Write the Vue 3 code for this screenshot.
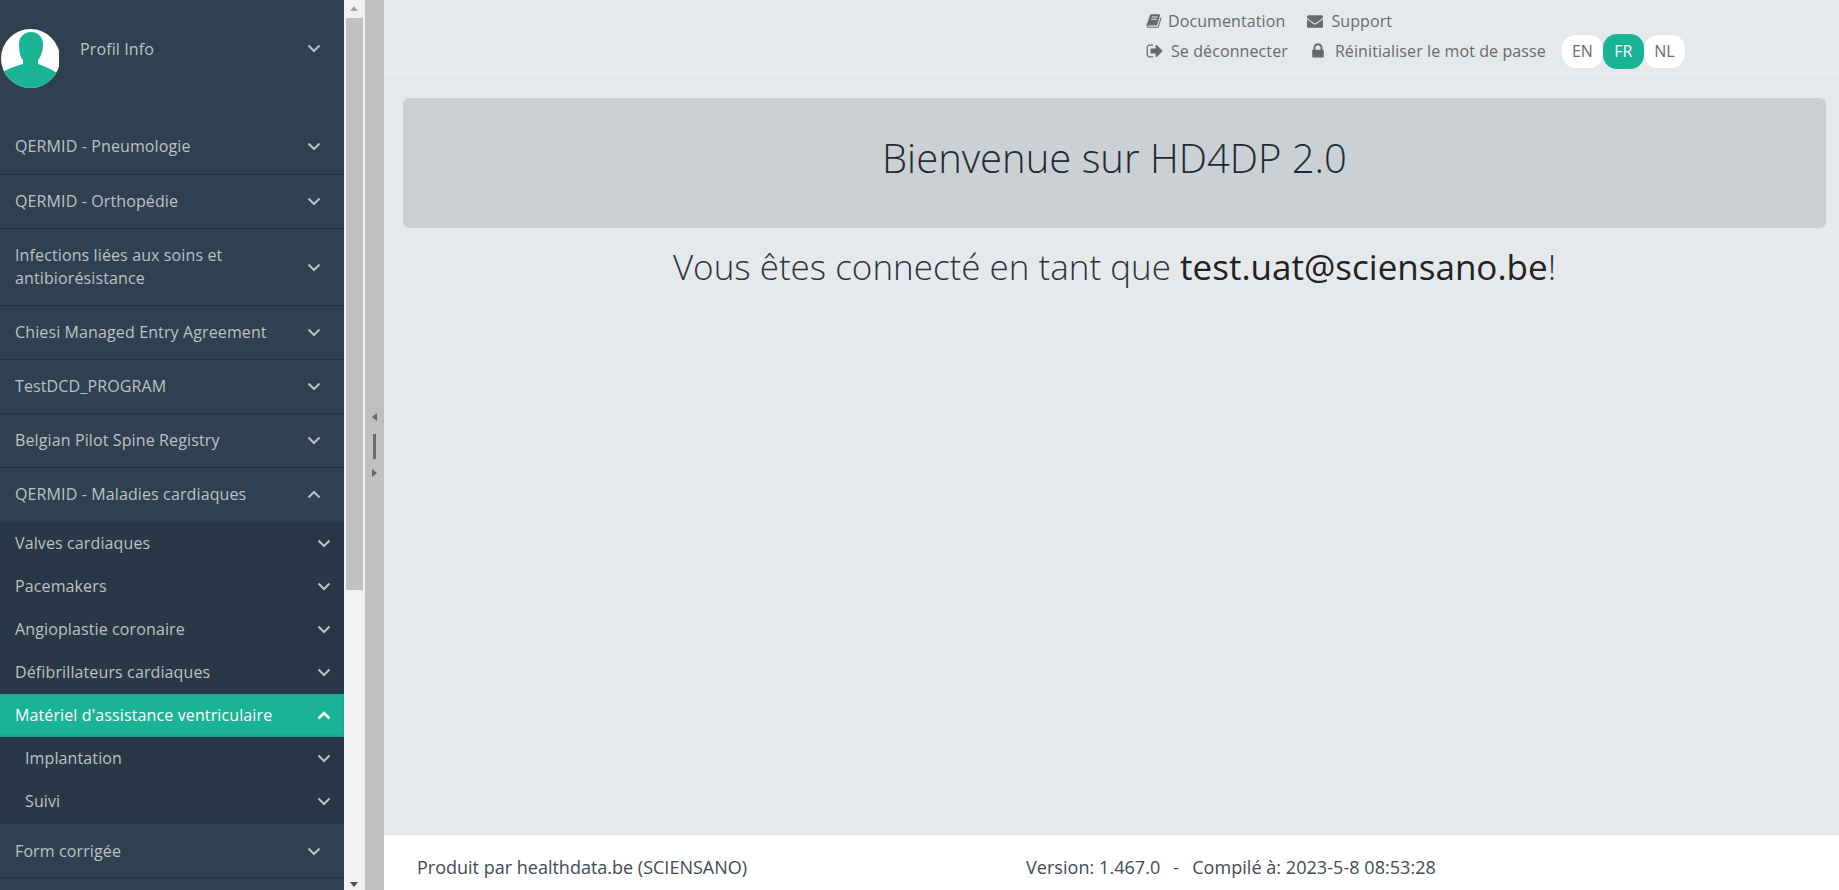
<script setup>
const topItems = [
  { label: 'QERMID - Pneumologie', first: true },
  { label: 'QERMID - Orthopédie' },
  { label: 'Infections liées aux soins et antibiorésistance', tall: true },
  { label: 'Chiesi Managed Entry Agreement' },
  { label: 'TestDCD_PROGRAM' },
  { label: 'Belgian Pilot Spine Registry' }
]
const subItems = ['Valves cardiaques', 'Pacemakers', 'Angioplastie coronaire', 'Défibrillateurs cardiaques']
const leafItems = ['Implantation', 'Suivi']
</script>

<template>
  <div class="page">
    <aside class="sidebar">
      <div class="profile">
        <svg class="avatar" viewBox="0 0 58 59" width="58" height="59">
          <defs><clipPath id="av"><circle cx="29.5" cy="29.5" r="29.5" /></clipPath></defs>
          <g clip-path="url(#av)">
            <rect width="59" height="59" fill="#fff" />
            <path d="M30 3C37 3 42 8 42 15C42 22 40 28 37 31V35C43 37 50 40 56 44L59 59H0V44C6 40 15 37 22 35V31C19 28 18 22 18 15C18 8 23 3 30 3Z" fill="#1ab394" />
          </g>
        </svg>
        <span class="profile-name">Profil Info</span>
        <svg class="chev" viewBox="0 0 14 9" width="14" height="9"><path d="M1.500 1.500 7 7l5.500-5.500" /></svg>
      </div>
      <nav class="menu">
        <div v-for="item in topItems" :key="item.label" class="row" :class="{ tall: item.tall, first: item.first }">
          <span class="label">{{ item.label }}</span>
          <svg class="chev" viewBox="0 0 14 9" width="14" height="9"><path d="M1.500 1.500 7 7l5.500-5.500" /></svg>
        </div>
        <div class="row open">
          <span class="label">QERMID - Maladies cardiaques</span>
          <svg class="chev" viewBox="0 0 14 9" width="14" height="9"><path d="M1.500 7.500 7 2l5.500 5.500" /></svg>
        </div>
        <div class="submenu">
          <div v-for="s in subItems" :key="s" class="subrow">
            <span>{{ s }}</span>
            <svg class="chev" viewBox="0 0 14 9" width="14" height="9"><path d="M1.500 1.500 7 7l5.500-5.500" /></svg>
          </div>
          <div class="subrow active">
            <span>Matériel d'assistance ventriculaire</span>
            <svg class="chev" viewBox="0 0 14 9" width="14" height="9"><path d="M1.500 7.500 7 2l5.500 5.500" /></svg>
          </div>
          <div v-for="l in leafItems" :key="l" class="subrow leaf">
            <span>{{ l }}</span>
            <svg class="chev" viewBox="0 0 14 9" width="14" height="9"><path d="M1.500 1.500 7 7l5.500-5.500" /></svg>
          </div>
        </div>
        <div class="row last">
          <span class="label">Form corrigée</span>
          <svg class="chev" viewBox="0 0 14 9" width="14" height="9"><path d="M1.500 1.500 7 7l5.500-5.500" /></svg>
        </div>
      </nav>
    </aside>

    <div class="scrollbar">
      <i class="arrow up"></i>
      <div class="thumb"></div>
      <i class="arrow down"></i>
    </div>

    <div class="splitter">
      <i class="tri left"></i>
      <div class="grip"></div>
      <i class="tri right"></i>
    </div>

    <main class="main">
      <header class="topbar">
        <div class="line">
          <a class="link doc">
            <svg class="ico" viewBox="0 0 1792 1792" width="16" height="16"><path d="M1703 478q40 57 18 129l-275 906q-19 64-76.500 107.500t-122.500 43.500h-923q-77 0-148.500-53.500t-99.500-131.500q-24-67-2-127 0-4 3-27t4-37q1-8-3-21.500t-3-19.500q2-11 8-21t16.500-23.500 16.500-23.500q23-38 45-91.500t30-91.500q3-10 .5-30t-.5-28q3-11 17-28t17-23q21-36 42-92t25-90q1-9-2.500-32t.5-28q4-13 22-30.500t22-22.500q19-26 42.500-84.500t27.500-96.500q1-8-3-25.500t-2-26.500q2-8 9-18t18-23 17-21q8-12 16.500-30.500t15-35 16-36 19.500-32 26.500-23.500 36-11.500 47.500 5.500l-1 3q38-9 51-9h761q74 0 114 56t18 130l-274 906q-36 119-71.500 153.500t-128.500 34.500h-869q-27 0-38 15-11 16-1 43 24 70 144 70h923q29 0 56-15.500t35-41.500l300-987q7-22 5-57 38 15 59 43zm-1064 2q-4 13 2 22.500t20 9.500h608q13 0 25.500-9.500t16.500-22.500l21-64q4-13-2-22.500t-20-9.500h-608q-13 0-25.500 9.500t-16.500 22.500zm-83 256q-4 13 2 22.500t20 9.500h608q13 0 25.500-9.500t16.500-22.500l21-64q4-13-2-22.500t-20-9.500h-608q-13 0-25.500 9.500t-16.500 22.500z" /></svg>
            Documentation
          </a>
          <a class="link support">
            <svg class="ico" viewBox="0 0 1792 1792" width="16" height="16"><path d="M1792 710v794q0 66-47 113t-113 47h-1472q-66 0-113-47t-47-113v-794q44 49 101 87 362 246 497 345 57 42 92.500 65.500t94.500 48 110 24.500h2q51 0 110-24.500t94.500-48 92.500-65.500q170-123 498-345 57-39 100-87zm0-294q0 79-49 151t-122 123q-376 261-468 325-10 7-42.500 30.500t-54 38-52 32.500-57.500 27-50 9h-2q-23 0-50-9t-57.500-27-52-32.500-54-38-42.500-30.500q-91-64-262-182.500t-205-142.500q-62-42-117-115.500t-55-136.500q0-78 41.500-130t118.500-52h1472q65 0 112.500 47t47.500 113z" /></svg>
            Support
          </a>
        </div>
        <div class="line second">
          <a class="link signout">
            <svg class="ico" viewBox="0 0 1792 1792" width="18" height="18"><path d="M704 1440q0 4 1 20t.5 26.500-3 23.500-10 19.500-20.500 6.500h-320q-119 0-203.500-84.500t-84.500-203.500v-704q0-119 84.500-203.500t203.500-84.500h320q13 0 22.500 9.500t9.500 22.500q0 4 1 20t.5 26.500-3 23.500-10 19.500-20.500 6.500h-320q-66 0-113 47t-47 113v704q0 66 47 113t113 47h312l11.500 1 11.500 3 8 5.500 7 9 2 13.500zm928-544q0 26-19 45l-544 544q-19 19-45 19t-45-19-19-45v-288h-448q-26 0-45-19t-19-45v-384q0-26 19-45t45-19h448v-288q0-26 19-45t45-19 45 19l544 544q19 19 19 45z" /></svg>
            Se déconnecter
          </a>
          <a class="link reset">
            <svg class="ico" viewBox="0 0 1792 1792" width="18" height="18"><path d="M640 768h512v-192q0-106-75-181t-181-75-181 75-75 181v192zm832 96v576q0 40-28 68t-68 28h-960q-40 0-68-28t-28-68v-576q0-40 28-68t68-28h32v-192q0-184 132-316t316-132 316 132 132 316v192h32q40 0 68 28t28 68z" /></svg>
            Réinitialiser le mot de passe
          </a>
          <div class="langs">
            <span class="lang">EN</span>
            <span class="lang on">FR</span>
            <span class="lang">NL</span>
          </div>
        </div>
      </header>

      <section class="content">
        <div class="hero"><h1>Bienvenue sur HD4DP 2.0</h1></div>
        <h2 class="welcome">Vous êtes connecté en tant que <b>test.uat@sciensano.be</b>!</h2>
      </section>

      <footer class="footer">
        <span class="credit">Produit par healthdata.be (SCIENSANO)</span>
        <span class="version">Version: 1.467.0<span class="dash">-</span>Compilé à: 2023-5-8 08:53:28</span>
      </footer>
    </main>
  </div>
</template>

<style>
html, body { margin: 0; height: 100%; overflow: hidden; }
</style>

<style scoped>
.page {
  display: flex;
  height: 890px;
  width: 1839px;
  overflow: hidden;
  font-family: "Open Sans", sans-serif;
  font-size: 16px;
}
.sidebar {
  width: 344px;
  flex: none;
  height: 890px;
  overflow: hidden;
  background: #2f4050;
  color: #bfc2c5;
  letter-spacing: 0.12px;
}
.profile {
  height: 120px;
  box-sizing: border-box;
  padding: 29px 23px 0 1px;
  display: flex;
  align-items: flex-start;
}
.avatar { flex: none; }
.profile-name { margin-left: 21px; line-height: 40px; flex: 1; }
.profile .chev { margin-top: 15px; }
.chev {
  flex: none;
  fill: none;
  stroke: currentColor;
  stroke-width: 2;
}
.row {
  height: 54px;
  box-sizing: border-box;
  border-bottom: 1px solid #26323f;
  padding: 0 23px 0 15px;
  display: flex;
  align-items: center;
  justify-content: space-between;
}
.row.first { height: 55px; padding-bottom: 1px; }
.row.tall { height: 77px; }
.row.last { padding-top: 2px; }
.row .label { max-width: 270px; line-height: 23px; }
.row.open { border-bottom: 0; padding-bottom: 1px; }
.submenu { background: #293846; border-bottom: 1px solid #26323f; }
.subrow {
  height: 43px;
  padding: 0 13px 0 15px;
  display: flex;
  align-items: center;
  justify-content: space-between;
}
.subrow span { position: relative; top: -1px; }
.subrow.active {
  background: #1ab394;
  color: #fff;
  box-sizing: border-box;
  border: 2px solid #19a98c;
  border-left: 0;
  border-right-width: 1px;
  padding-right: 12px;
}
.subrow.active .chev { stroke-width: 2.500; }
.subrow.leaf { padding-left: 25px; }

.scrollbar {
  width: 21px;
  flex: none;
  background: #f1f1f1;
  position: relative;
  box-sizing: border-box;
  padding: 18px 2px 0;
}
.thumb { height: 572px; background: #c1c1c1; }
.arrow {
  position: absolute;
  left: 6px;
  width: 0;
  height: 0;
  border-left: 4.500px solid transparent;
  border-right: 4.500px solid transparent;
}
.arrow.up { top: 6px; border-bottom: 5px solid #a3a3a3; }
.arrow.down { bottom: 3px; border-top: 5px solid #505050; }

.splitter {
  width: 19px;
  flex: none;
  background: #c0c0c0;
  display: flex;
  flex-direction: column;
  align-items: center;
  justify-content: center;
}
.grip { width: 3px; height: 25px; background: #6b6b6b; margin: 13px 0 10px; }
.tri { width: 0; height: 0; border-top: 4px solid transparent; border-bottom: 4px solid transparent; }
.tri.left { border-right: 5px solid #666; }
.tri.right { border-left: 5px solid #666; }

.main {
  flex: 1;
  min-width: 0;
  display: flex;
  flex-direction: column;
  background: #e6e9ec;
}
.topbar {
  height: 80px;
  flex: none;
  box-sizing: border-box;
  border-bottom: 1px solid #dfe3e6;
  padding: 6px 0 0 762px;
  color: #676a6c;
  letter-spacing: 0.1px;
}
.line { display: flex; align-items: center; height: 30px; }
.line.second { height: 36px; margin-top: -3px; }
.link { display: inline-flex; align-items: center; white-space: nowrap; }
.doc { gap: 6px; }
.support { margin-left: 22px; gap: 8px; }
.signout { gap: 7px; }
.reset { margin-left: 21px; gap: 8px; }
.ico { fill: #676a6c; flex: none; }
.langs { display: flex; margin-left: 16px; letter-spacing: 0; }
.lang {
  width: 41px;
  height: 33px;
  display: flex;
  align-items: center;
  justify-content: center;
  background: #fff;
  border-radius: 14px;
}
.lang.on { background: #1ab394; color: #fff; height: 35px; margin-top: -1px; margin-bottom: -1px; z-index: 1; }

.content { flex: 1; padding: 18px 13px 0 19px; }
.hero {
  height: 130px;
  box-sizing: border-box;
  padding-bottom: 12px;
  background: #cbd0d4;
  border-radius: 6px;
  display: flex;
  align-items: center;
  justify-content: center;
}
.hero h1 { margin: 0; font-size: 40px; font-weight: 300; color: #1f2a36; }
.welcome {
  margin: 15px 0 0;
  text-align: center;
  font-size: 35px;
  font-weight: 300;
  line-height: 48px;
  color: #2a3440;
}
.welcome b { font-weight: 400; color: #222; }

.footer {
  height: 56px;
  flex: none;
  box-sizing: border-box;
  background: #fff;
  border-top: 1px solid #dfe3e6;
  padding: 9px 0 0 33px;
  display: flex;
  align-items: center;
  color: #404a54;
  font-size: 18px;
}
.credit { width: 609px; flex: none; }
.version { letter-spacing: 0.05px; }
.dash { margin: 0 13px; }
</style>
